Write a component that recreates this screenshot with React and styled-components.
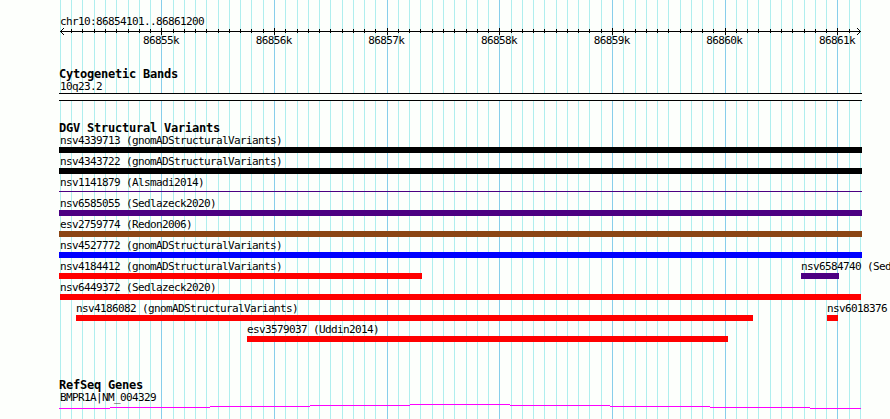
import React from "react";
import styled, { createGlobalStyle } from "styled-components";

const TRACK_START = 59;
const GRID_STEP = 800 / 71;

// one line every 100 bases, a darker one every 1000
const gridLines = Array.from({ length: 72 }, (_, i) => ({
  x: Math.floor(60.4 + i * GRID_STEP),
  major: i % 10 === 9,
}));

const rulerLabels = [
  "86855k",
  "86856k",
  "86857k",
  "86858k",
  "86859k",
  "86860k",
  "86861k",
];

const variantRows = [
  [{ name: "nsv4339713 (gnomADStructuralVariants)", start: 59, end: 862, color: "#000000" }],
  [{ name: "nsv4343722 (gnomADStructuralVariants)", start: 59, end: 862, color: "#000000" }],
  [{ name: "nsv1141879 (Alsmadi2014)", start: 59, end: 862, color: "#4b0082", thin: true }],
  [{ name: "nsv6585055 (Sedlazeck2020)", start: 59, end: 862, color: "#4b0082" }],
  [{ name: "esv2759774 (Redon2006)", start: 59, end: 862, color: "#8b4513" }],
  [{ name: "nsv4527772 (gnomADStructuralVariants)", start: 59, end: 862, color: "#0000ff" }],
  [
    { name: "nsv4184412 (gnomADStructuralVariants)", start: 59, end: 422, color: "#ff0000" },
    { name: "nsv6584740 (Sed", start: 801, end: 839, color: "#4b0082" },
  ],
  [{ name: "nsv6449372 (Sedlazeck2020)", start: 60, end: 861, color: "#ff0000" }],
  [
    { name: "nsv4186082 (gnomADStructuralVariants)", start: 76, end: 753, color: "#ff0000" },
    { name: "nsv6018376", start: 827, end: 838, color: "#ff0000" },
  ],
  [{ name: "esv3579037 (Uddin2014)", start: 247, end: 728, color: "#ff0000" }],
];

const GridBackground = () => (
  <GridSvg width="890" height="419" shapeRendering="crispEdges">
    {gridLines.map(({ x, major }) => (
      <rect
        key={x}
        x={x}
        y="0"
        width="1"
        height="419"
        fill={major ? "#87ceeb" : "#afeeee"}
      />
    ))}
  </GridSvg>
);

const Ruler = () => (
  <RulerSvg width="890" height="7" shapeRendering="crispEdges">
    <rect x="60" y="3" width="801" height="1" />
    {gridLines.slice(1, -1).map(({ x, major }) => (
      <rect
        key={x}
        x={x}
        y={major ? 0 : 1}
        width="1"
        height={major ? 7 : 4}
      />
    ))}
    {/* arrow heads */}
    {[1, 2, 3].map((n) => (
      <g key={n}>
        <rect x={60 + n} y={3 - n} width="1" height="1" />
        <rect x={60 + n} y={3 + n} width="1" height="1" />
        <rect x={860 - n} y={3 - n} width="1" height="1" />
        <rect x={860 - n} y={3 + n} width="1" height="1" />
      </g>
    ))}
  </RulerSvg>
);

const VariantRow = ({ features }) => (
  <Row>
    {features.map((feature, i) => {
      const offset = feature.start - (i > 0 ? features[i - 1].end : 0);
      return (
        <Feature
          key={feature.name}
          style={{ marginLeft: offset, width: feature.end - feature.start }}
        >
          <Label $indent={feature.start === TRACK_START ? 1 : 0}>
            {feature.name}
          </Label>
          <Bar $color={feature.color} $thin={feature.thin} />
        </Feature>
      );
    })}
  </Row>
);

const GeneLine = () => (
  <GeneSvg
    width="890"
    height="5"
    shapeRendering="crispEdges"
    fill="#ff00ff"
  >
    <rect x="59" y="4" width="51" height="1" />
    <rect x="110" y="3" width="100" height="1" />
    <rect x="210" y="2" width="100" height="1" />
    <rect x="310" y="1" width="100" height="1" />
    <rect x="410" y="0" width="100" height="1" />
    <rect x="510" y="1" width="100" height="1" />
    <rect x="610" y="2" width="100" height="1" />
    <rect x="710" y="3" width="100" height="1" />
    <rect x="810" y="4" width="51" height="1" />
  </GeneSvg>
);

const App = () => {
  return (
    <>
      <GlobalStyle />
      <Browser>
        <GridBackground />
        <Content>
          <RulerTrack>
            <TrackLabel>chr10:86854101..86861200</TrackLabel>
            <Ruler />
            <RulerLabels>
              {rulerLabels.map((label) => (
                <Label key={label}>{label}</Label>
              ))}
            </RulerLabels>
          </RulerTrack>
          <Track>
            <Heading>Cytogenetic Bands</Heading>
            <TrackLabel>10q23.2</TrackLabel>
            <Band />
          </Track>
          <Track $gap={21}>
            <Heading>DGV Structural Variants</Heading>
            {variantRows.map((features) => (
              <VariantRow key={features[0].name} features={features} />
            ))}
          </Track>
          <Track $gap={35}>
            <Heading>RefSeq Genes</Heading>
            <TrackLabel>BMPR1A|NM_004329</TrackLabel>
            <GeneLine />
          </Track>
        </Content>
      </Browser>
    </>
  );
};

export default App;

const GlobalStyle = createGlobalStyle`
  body {
    margin: 0;
    background-color: #fdfffc;
  }
`;

const Browser = styled.div`
  position: relative;
  width: 890px;
  height: 419px;
  overflow: hidden;
  color: #000;
  font-family: "DejaVu Sans Mono", monospace;
`;

const GridSvg = styled.svg`
  position: absolute;
  top: 0;
  left: 0;
`;

const Content = styled.div`
  position: relative;
  display: flex;
  flex-direction: column;
`;

const RulerTrack = styled.div`
  height: 47px;
  padding-top: 15px;
  margin-bottom: 6px;
`;

const Track = styled.div`
  padding-top: ${({ $gap }) => $gap || 0}px;
`;

const Heading = styled.div`
  height: 12px;
  padding-left: 59px;
  font-size: 12px;
  font-weight: bold;
  line-height: 12px;
  letter-spacing: -0.224px;
  white-space: pre;
`;

const Label = styled.div`
  height: 13px;
  padding-left: ${({ $indent }) => $indent || 0}px;
  font-size: 11px;
  line-height: 13px;
  letter-spacing: -0.622px;
  white-space: pre;
`;

const TrackLabel = styled(Label)`
  padding-left: 60px;
`;

const RulerSvg = styled.svg`
  display: block;
  margin-bottom: -1px;
`;

const RulerLabels = styled.div`
  display: grid;
  grid-template-columns: repeat(7, 112.68px);
  padding-left: 143px;
`;

const Band = styled.div`
  box-sizing: border-box;
  width: 803px;
  height: 8px;
  margin-left: 59px;
  border: solid #000;
  border-width: 1px 0;
  background-color: #fdfffc;
`;

const Row = styled.div`
  display: flex;
  height: 21px;
`;

const Feature = styled.div`
  flex: none;
`;

const Bar = styled.div`
  height: ${({ $thin }) => ($thin ? 1 : 6)}px;
  margin-top: ${({ $thin }) => ($thin ? 2 : 0)}px;
  background-color: ${({ $color }) => $color};
`;

const GeneSvg = styled.svg`
  display: block;
`;
